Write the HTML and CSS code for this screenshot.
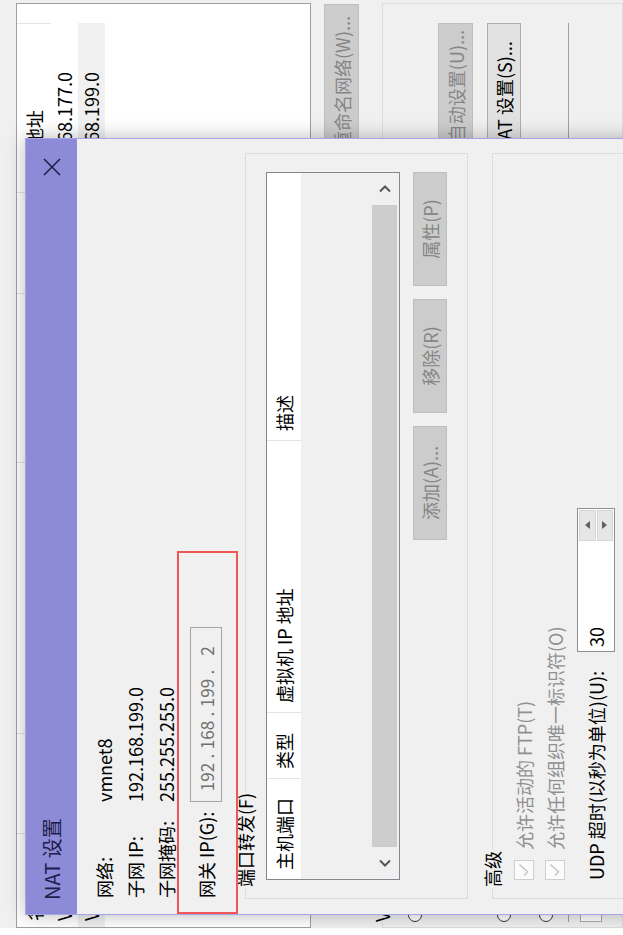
FILE: index.html
```html
<!DOCTYPE html>
<html lang="zh-CN">
<head>
<meta charset="utf-8">
<title>NAT 设置</title>
<link rel="stylesheet" href="styles.css">
</head>
<body>
<div class="screen">
  <div class="bgwin">
    <div class="bg-list">
      <div class="bg-head">
        <div class="bg-col c1">名称</div>
        <div class="bg-col c2">类型</div>
        <div class="bg-col c3">外部连接</div>
        <div class="bg-col c4">主机连接</div>
        <div class="bg-col c5">DHCP</div>
        <div class="bg-col c6">子网地址</div>
      </div>
      <div class="bg-row">
        <div class="bg-cell c1">VMnet1</div>
        <div class="bg-cell c2">仅主机...</div>
        <div class="bg-cell c3">-</div>
        <div class="bg-cell c4">已连接</div>
        <div class="bg-cell c5">已启用</div>
        <div class="bg-cell c6">192.168.177.0</div>
      </div>
      <div class="bg-row sel">
        <div class="bg-cell c1">VMnet8</div>
        <div class="bg-cell c2">NAT 模式</div>
        <div class="bg-cell c3">NAT 模式</div>
        <div class="bg-cell c4">已连接</div>
        <div class="bg-cell c5">已启用</div>
        <div class="bg-cell c6">192.168.199.0</div>
      </div>
    </div>
    <div class="bg-btnrow">
      <div class="btn dis bg-rename">重命名网络(W)...</div>
    </div>
    <fieldset class="bg-group">
      <legend>VMnet 信息</legend>
      <div class="bg-r1"><span class="radio"></span><span class="bg-rl">桥接模式(将虚拟机直接连接到外部网络)(B)</span></div>
      <div class="bg-r2"><span class="bg-rl">已桥接至(G):</span><div class="btn dis bg-auto">自动设置(U)...</div></div>
      <div class="bg-r3"><span class="radio on"></span><span class="bg-rl">NAT 模式(与虚拟机共享主机的 IP 地址)(N)</span><div class="btn bg-nat">NAT 设置(S)...</div></div>
      <div class="bg-r4"><span class="radio"></span><span class="bg-rl">仅主机模式(在专用网络内连接虚拟机)(H)</span></div>
      <div class="bg-sep"></div>
      <div class="bg-box"></div>
    </fieldset>
  </div>

  <div class="dialog">
    <div class="titlebar">
      <span class="title">NAT 设置</span>
      <svg class="close" viewBox="0 0 18 18" width="18" height="18"><path d="M1 1L17 17M17 1L1 17" stroke="#1d1d40" stroke-width="1.5" fill="none"/></svg>
    </div>
    <div class="dbody">
      <div class="info">
        <div class="lbl">网络:</div><div class="val">vmnet8</div>
        <div class="lbl">子网 IP:</div><div class="val">192.168.199.0</div>
        <div class="lbl">子网掩码:</div><div class="val">255.255.255.0</div>
      </div>
      <div class="gw">
        <div class="lbl gw-lbl">网关 IP(G):</div>
        <div class="ipbox">
          <span class="oct">192</span><span class="dot">.</span><span class="oct">168</span><span class="dot">.</span><span class="oct">199</span><span class="dot">.</span><span class="oct">2</span>
        </div>
      </div>

      <fieldset class="group port">
        <legend>端口转发(F)</legend>
        <div class="listbox">
          <div class="lv-head">
            <div class="lv-col w1">主机端口</div>
            <div class="lv-col w2">类型</div>
            <div class="lv-col w3">虚拟机 IP 地址</div>
            <div class="lv-col w4">描述</div>
          </div>
          <div class="lv-body"></div>
          <div class="hscroll">
            <div class="sb-btn"><svg viewBox="0 0 8 12" width="8" height="12"><path d="M6.5 1L1.5 6L6.5 11" stroke="#555" stroke-width="2" fill="none"/></svg></div>
            <div class="sb-thumb"></div>
            <div class="sb-btn"><svg viewBox="0 0 8 12" width="8" height="12"><path d="M1.5 1L6.5 6L1.5 11" stroke="#555" stroke-width="2" fill="none"/></svg></div>
          </div>
        </div>
        <div class="btnrow">
          <div class="btn dis act">添加(A)...</div>
          <div class="btn dis act">移除(R)</div>
          <div class="btn dis act">属性(P)</div>
        </div>
      </fieldset>

      <fieldset class="group adv">
        <legend>高级</legend>
        <div class="chk-row">
          <span class="chk"><svg viewBox="0 0 20 20" width="18" height="18"><path d="M4 10L8 14L16 5" stroke="#c6c6c6" stroke-width="1.6" fill="none"/></svg></span>
          <span class="chk-label">允许活动的 FTP(T)</span>
        </div>
        <div class="chk-row">
          <span class="chk"><svg viewBox="0 0 20 20" width="18" height="18"><path d="M4 10L8 14L16 5" stroke="#c6c6c6" stroke-width="1.6" fill="none"/></svg></span>
          <span class="chk-label">允许任何组织唯一标识符(O)</span>
        </div>
        <div class="udp-row">
          <span class="udp-label">UDP 超时(以秒为单位)(U):</span>
          <div class="spin">
            <span class="spin-val">30</span>
            <div class="spin-btns">
              <div class="spin-btn"><svg viewBox="0 0 8 5" width="8" height="5"><path d="M0 5L4 0L8 5Z" fill="#606060"/></svg></div>
              <div class="spin-btn"><svg viewBox="0 0 8 5" width="8" height="5"><path d="M0 0L8 0L4 5Z" fill="#606060"/></svg></div>
            </div>
          </div>
        </div>
      </fieldset>
    </div>
  </div>

  <div class="annot"></div>
</div>
</body>
</html>
```

FILE: styles.css
```css
html, body {
  margin: 0;
  padding: 0;
  overflow: hidden;
  background: #fff;
}
body {
  width: 623px;
  height: 935px;
}
.screen {
  position: relative;
  width: 935px;
  height: 623px;
  transform-origin: 0 0;
  transform: translateY(935px) rotate(-90deg);
  overflow: hidden;
  background: #fff;
  font-family: "Noto Sans CJK SC", "Noto Sans", sans-serif;
  font-size: 18px;
  color: #000;
}

/* ---------- background window ---------- */
.bgwin {
  margin-left: 7px;
  height: 623px;
  background: #f0f0f0;
  display: flex;
  flex-direction: column;
}
.bg-list {
  margin-top: 16px;
  margin-right: 3px;
  height: 295px;
  box-sizing: border-box;
  border: 1px solid #a0a0a0;
  background: #fff;
  overflow: hidden;
  flex: none;
}
.bg-head, .bg-row {
  display: flex;
}
.bg-head {
  height: 34px;
  line-height: 34px;
}
.bg-row {
  height: 27px;
  line-height: 27px;
}
.bg-col, .bg-cell {
  box-sizing: border-box;
  padding-left: 10px;
  white-space: nowrap;
  overflow: hidden;
  flex: none;
}
.bg-col {
  border-right: 1px solid #e5e5e5;
}
.bg-row.sel .bg-cell {
  background: #f0f0f0;
}
.c1 { width: 94px; padding-left: 6px; }
.c2 { width: 100px; }
.c3 { width: 271px; }
.c4 { width: 169px; }
.c5 { width: 101px; }
.c6 { width: 169px; }
.bg-cell.c6 { padding-left: 5px; }

.bg-btnrow {
  margin-top: 13px;
  display: flex;
  justify-content: flex-end;
  padding-right: 4px;
  flex: none;
}
.btn {
  box-sizing: border-box;
  display: flex;
  align-items: center;
  justify-content: center;
  border: 1px solid #adadad;
  background: #e1e1e1;
  color: #000;
  white-space: nowrap;
  line-height: 1;
}
.btn.dis {
  background: #cccccc;
  border-color: #bfbfbf;
  color: #868686;
}
.bg-rename {
  height: 35px;
  padding: 0 11px;
}
.bg-group {
  margin: 13px 3px 0 0;
  padding: 10px 19px 0 5px;
  border: 1px solid #dcdcdc;
  min-width: 0;
  flex: 1;
}
.bg-group legend {
  padding: 0;
  line-height: 20px;
}
.bg-r1, .bg-r4 {
  height: 26px;
  display: flex;
  align-items: center;
  gap: 8px;
}
.bg-r4 { margin-top: 12px; }
.bg-r2, .bg-r3 {
  display: flex;
  align-items: center;
  gap: 8px;
}
.bg-r2 {
  margin-top: 10px;
  height: 35px;
  padding-left: 22px;
}
.bg-r3 {
  margin-top: 14px;
  height: 34px;
}
.bg-rl {
  white-space: nowrap;
}
.bg-auto {
  margin-left: auto;
  height: 35px;
  width: 135px;
  justify-content: flex-end;
  padding-right: 6px;
}
.bg-nat {
  margin-left: auto;
  height: 34px;
  width: 148px;
}
.radio {
  box-sizing: border-box;
  width: 14px;
  height: 14px;
  border: 1px solid #333;
  border-radius: 50%;
  background: #fff;
  flex: none;
}
.bg-sep {
  margin-top: 9px;
  border-top: 1px solid #a0a0a0;
}
.bg-box {
  margin-top: 11px;
  width: 120px;
  height: 22px;
  box-sizing: border-box;
  border: 1px solid #aaa;
  background: #fff;
}

/* ---------- NAT dialog ---------- */
.dialog {
  position: absolute;
  left: 20px;
  top: 25px;
  width: 777px;
  height: 650px;
  box-sizing: border-box;
  border: 1px solid #a6a3e6;
  background: #f0f0f0;
  box-shadow: 0 0 18px rgba(0, 0, 0, 0.28);
  display: flex;
  flex-direction: column;
}
.titlebar {
  height: 51px;
  flex: none;
  background: #8d8ad8;
  display: flex;
  align-items: center;
  padding: 0 19px 0 14px;
}
.title {
  font-size: 20px;
  color: #1e1e4a;
  line-height: 1;
}
.close {
  margin-left: auto;
}
.dbody {
  padding: 11px 14px 0 15px;
}
.info {
  display: grid;
  grid-template-columns: 96px auto;
  grid-auto-rows: 31px;
  align-items: center;
  padding-left: 1px;
}
.lbl, .val {
  line-height: 24px;
  white-space: nowrap;
}
.gw {
  margin-top: 9px;
  padding-left: 1px;
  display: flex;
  align-items: center;
  height: 32px;
}
.gw-lbl {
  width: 96px;
  flex: none;
}
.ipbox {
  box-sizing: border-box;
  width: 175px;
  height: 32px;
  border: 1px solid #a5a5a5;
  background: #f0f0f0;
  display: flex;
  align-items: center;
  padding-left: 6px;
  color: #6f6f6f;
  font-size: 17px;
}
.oct {
  width: 36px;
  text-align: center;
}
.dot {
  width: 6px;
  text-align: center;
}

.group {
  border: 1px solid #dcdcdc;
  margin: 0;
  min-width: 0;
}
.group legend {
  padding: 0 2px;
  margin-left: -9px;
  line-height: 20px;
}
.port {
  margin-top: 13px;
  padding: 11px 18px 20px 18px;
}
.listbox {
  box-sizing: border-box;
  height: 134px;
  border: 1px solid #828790;
  display: flex;
  flex-direction: column;
}
.lv-head {
  height: 34px;
  flex: none;
  display: flex;
  background: #fff;
  line-height: 34px;
}
.lv-col {
  box-sizing: border-box;
  padding-left: 9px;
  border-right: 1px solid #e5e5e5;
  white-space: nowrap;
}
.w1 { width: 101px; }
.w2 { width: 66px; }
.w3 { width: 272px; }
.w4 { flex: 1; border-right: none; }
.lv-body {
  flex: 1;
  background: #f0f0f0;
}
.hscroll {
  height: 29px;
  flex: none;
  display: flex;
  background: #f0f0f0;
}
.sb-btn {
  width: 32px;
  display: flex;
  align-items: center;
  justify-content: center;
  flex: none;
}
.sb-thumb {
  flex: 1;
  margin: 2px 0;
  background: #cdcdcd;
}
.btnrow {
  margin-top: 13px;
  display: flex;
  justify-content: flex-end;
  gap: 13px;
}
.act {
  width: 114px;
  height: 34px;
}

.adv {
  margin-top: 14px;
  padding: 6px 18px 20px 18px;
}
.chk-row {
  height: 31px;
  display: flex;
  align-items: center;
}
.chk {
  box-sizing: border-box;
  width: 20px;
  height: 20px;
  border: 1px solid #cfcfcf;
  background: #fbfbfb;
  display: flex;
  align-items: center;
  justify-content: center;
  flex: none;
}
.chk-label {
  margin-left: 10px;
  color: #909090;
  white-space: nowrap;
}
.udp-row {
  margin-top: 7px;
  height: 38px;
  display: flex;
  align-items: center;
}
.udp-label {
  width: 228px;
  flex: none;
  white-space: nowrap;
}
.spin {
  box-sizing: border-box;
  width: 144px;
  height: 38px;
  border: 1px solid #8f8f8f;
  background: #fff;
  display: flex;
  align-items: center;
}
.spin-val {
  flex: 1;
  padding-left: 4px;
}
.spin-btns {
  width: 31px;
  height: 34px;
  margin-right: 1px;
  display: flex;
  flex-direction: column;
  gap: 1px;
}
.spin-btn {
  flex: 1;
  box-sizing: border-box;
  background: #e6e6e6;
  border: 1px solid #d6d6d6;
  display: flex;
  align-items: center;
  justify-content: center;
}

/* annotation rectangle drawn over the dialog */
.annot {
  position: absolute;
  left: 21px;
  top: 177px;
  width: 363px;
  height: 61px;
  box-sizing: border-box;
  border: 2px solid #ef5757;
}
```
